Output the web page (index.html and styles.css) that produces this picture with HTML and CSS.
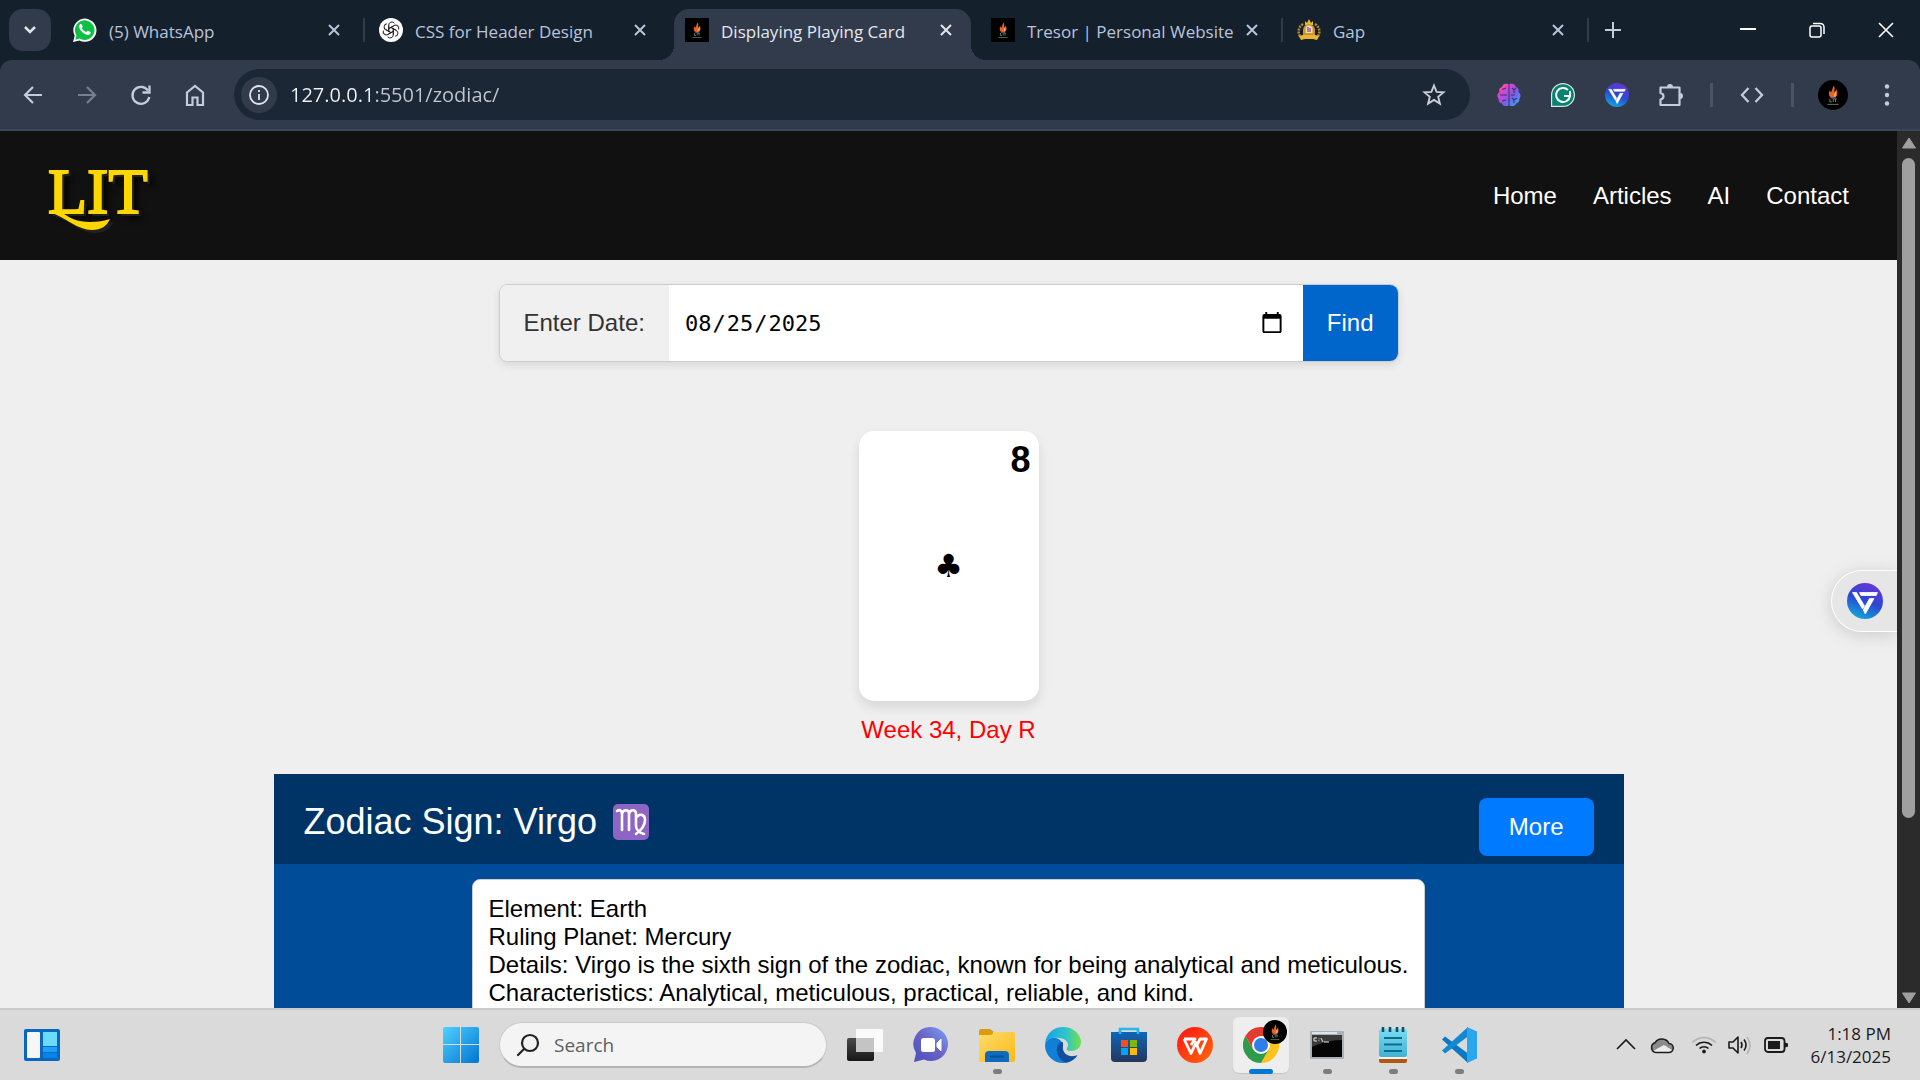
FILE: index.html
```html
<!DOCTYPE html>
<html lang="en">

<head>
    <meta charset="UTF-8">
    <meta name="viewport" content="width=device-width, initial-scale=1.0">
    <title>Displaying Playing Card</title>
    <link rel="stylesheet" href="styles.css">
</head>

<body>

    <!-- Shared icons -->
    <svg class="sprite" aria-hidden="true">
        <defs>
            <linearGradient id="gradV" x1="0.7" y1="0" x2="0.3" y2="1">
                <stop offset="0" stop-color="#6a35d8"/>
                <stop offset="0.5" stop-color="#2a48d2"/>
                <stop offset="1" stop-color="#12a9dc"/>
            </linearGradient>
            <linearGradient id="gradWin" x1="0" y1="0" x2="1" y2="1">
                <stop offset="0" stop-color="#4fd2ff"/>
                <stop offset="1" stop-color="#0173d2"/>
            </linearGradient>
            <linearGradient id="gradBrain" x1="0" y1="0" x2="1" y2="1">
                <stop offset="0" stop-color="#ff9a3d"/>
                <stop offset="0.25" stop-color="#e83fd0"/>
                <stop offset="0.6" stop-color="#7a5cf0"/>
                <stop offset="1" stop-color="#2fb4ff"/>
            </linearGradient>
            <linearGradient id="gradChat" x1="0" y1="1" x2="1" y2="0">
                <stop offset="0" stop-color="#4a50c0"/>
                <stop offset="0.5" stop-color="#6a61c4"/>
                <stop offset="1" stop-color="#7ba4fa"/>
            </linearGradient>
            <linearGradient id="gradFolder" x1="0" y1="0" x2="1" y2="1">
                <stop offset="0" stop-color="#ffdc6b"/>
                <stop offset="1" stop-color="#fbb918"/>
            </linearGradient>
            <linearGradient id="gradEdge" x1="0" y1="0" x2="1" y2="0">
                <stop offset="0" stop-color="#1b9de2"/>
                <stop offset="0.55" stop-color="#2cc3d2"/>
                <stop offset="1" stop-color="#6ee04c"/>
            </linearGradient>
            <linearGradient id="gradStore" x1="0" y1="0" x2="0" y2="1">
                <stop offset="0" stop-color="#0f66b8"/>
                <stop offset="1" stop-color="#24365f"/>
            </linearGradient>
            <linearGradient id="gradWps" x1="0" y1="0" x2="1" y2="1">
                <stop offset="0" stop-color="#ff1313"/>
                <stop offset="1" stop-color="#ff6a0a"/>
            </linearGradient>
            <linearGradient id="gradNote" x1="0" y1="0" x2="0" y2="1">
                <stop offset="0" stop-color="#7bdcf2"/>
                <stop offset="1" stop-color="#3fb2d4"/>
            </linearGradient>
            <linearGradient id="gradTask" x1="0" y1="0" x2="0" y2="1">
                <stop offset="0" stop-color="#4a4a4a"/>
                <stop offset="1" stop-color="#171717"/>
            </linearGradient>
        </defs>
        <symbol id="close" viewBox="0 0 14 14">
            <path d="M2 2l10 10M12 2L2 12" fill="none" stroke="currentColor" stroke-width="2"/>
        </symbol>
        <symbol id="flame" viewBox="0 0 24 24">
            <path d="M12.500 4.500c1.600 2 .2 3.800.8 5.500.5-.8.800-1.600 1.500-2.600 1.300 3 .8 5.600-1 6.600-1.800.8-4 .3-4.800-1.500-.6-1.800 0-3.500.6-4.300.2.9.5 1.400.9 1.500.9-1.500 1-3.400 2-5.200z" fill="#e8622b"/>
            <path d="M14.200 9c.8 2 0 4-1.200 4.600-.8-1.200.4-3 1.200-4.600z" fill="#ffc04a"/>
            <path d="M9.500 13c1.500 1.300 3.500 1.300 5 0l-1 2h-3z" fill="#6a35c9"/>
            <path d="M9.500 15v2.500h1.500M12.200 15v2.500M13 15.200h2M14 15.200v2.300" fill="none" stroke="#5f9c2b" stroke-width="0.8"/>
            <path d="M7.500 19.500h9" stroke="#7a7a7a" stroke-width="0.7"/>
        </symbol>
        <symbol id="vmark" viewBox="0 0 36 36">
            <circle cx="18" cy="18" r="18" fill="url(#gradV)"/>
            <path d="M12.500 9.500H30.500l-1.300 3H14zM5.500 9.500h4l8 13.500-2 3zM22.500 15.500h4.500l-8.700 15.500-2-4z" fill="#fff" stroke="#fff" stroke-width="0.8" stroke-linejoin="round"/>
        </symbol>
    </svg>

    <!-- Tab strip -->
    <div class="tab-strip">
        <button class="tab-search" aria-label="Search tabs">
            <svg width="16" height="16" viewBox="0 0 16 16"><path d="M3 5l5 5 5-5" fill="none" stroke="#dfe3ea" stroke-width="2.500"/></svg>
        </button>
        <div class="tabs">
            <div class="tab">
                <svg class="favicon" viewBox="0 0 24 24">
                    <path d="M0 24l1.700-6.200A11.600 11.600 0 1 1 6.300 22.400z" fill="#fff"/>
                    <path d="M2.200 21.800l1.200-4.400a9.800 9.800 0 1 1 3.300 3.200z" fill="#0fc143"/>
                    <path d="M8.600 6.300c-.3-.6-1.200-.5-1.600 0-2.600 3 1.600 7.700 4 9.200 2.500 1.500 4.500 2 6.100.4.600-.7.700-1.700.4-1.900l-2.600-1.300c-.6-.2-1.300 1.500-1.900 1.300-1.700-.6-3.400-2.200-4.100-3.700-.2-.5 1-1.200.9-1.700z" fill="#fff"/>
                </svg>
                <button class="tab-title">(5) WhatsApp</button>
                <button class="tab-close" aria-label="Close tab"><svg><use href="#close"/></svg></button>
            </div>
            <div class="tab">
                <svg class="favicon" viewBox="0 0 24 24">
                    <circle cx="12" cy="12" r="12" fill="#fff"/>
                    <g fill="none" stroke="#222" stroke-width="1" stroke-linejoin="round">
                        <path id="petal" d="M9.700 13.300V7.200a3.200 3.200 0 0 1 5.700-2M9.700 10.700l5.200-3"/>
                        <use href="#petal" transform="rotate(60 12 12)"/>
                        <use href="#petal" transform="rotate(120 12 12)"/>
                        <use href="#petal" transform="rotate(180 12 12)"/>
                        <use href="#petal" transform="rotate(240 12 12)"/>
                        <use href="#petal" transform="rotate(300 12 12)"/>
                    </g>
                </svg>
                <button class="tab-title">CSS for Header Design</button>
                <button class="tab-close" aria-label="Close tab"><svg><use href="#close"/></svg></button>
            </div>
            <div class="tab active">
                <svg class="favicon flame"><use href="#flame"/></svg>
                <button class="tab-title">Displaying Playing Card</button>
                <button class="tab-close" aria-label="Close tab"><svg><use href="#close"/></svg></button>
            </div>
            <div class="tab">
                <svg class="favicon flame"><use href="#flame"/></svg>
                <button class="tab-title">Tresor | Personal Website</button>
                <button class="tab-close" aria-label="Close tab"><svg><use href="#close"/></svg></button>
            </div>
            <div class="tab">
                <svg class="favicon" viewBox="0 0 24 24">
                    <path d="M6 6C0 10 1 16 4 20M18 6c6 4 5 10 2 14" fill="none" stroke="#b9892b" stroke-width="2.500" stroke-dasharray="2 1"/>
                    <path d="M8 3l2 2 2-4 2 4 2-2v4H8z" fill="#f0b92d"/>
                    <path d="M6 12a6 6 0 0 1 12 0v6H6z" fill="#c9952f"/>
                    <path d="M8.500 11a3.500 3.500 0 0 1 7 0v4h-7z" fill="#f0dcb0"/>
                    <path d="M11 9v5M13 10v4" stroke="#8b3f7d" stroke-width="1.200"/>
                    <path d="M2 18l4-1h12l4 1-2 4-4-1H8l-4 1z" fill="#edb52f"/>
                </svg>
                <button class="tab-title">Gap</button>
                <button class="tab-close" aria-label="Close tab"><svg><use href="#close"/></svg></button>
            </div>
        </div>
        <button class="new-tab" aria-label="New tab">
            <svg width="16" height="16" viewBox="0 0 16 16"><path d="M8 0v16M0 8h16" stroke="#c3cbdc" stroke-width="2"/></svg>
        </button>
        <div class="window-controls">
            <button aria-label="Minimize"><svg width="16" height="16" viewBox="0 0 16 16"><path d="M0 7h16" stroke="#fff" stroke-width="2"/></svg></button>
            <button aria-label="Restore"><svg width="16" height="16" viewBox="0 0 16 16" fill="none" stroke="#fff" stroke-width="1.500"><rect x="1" y="4" width="11" height="11" rx="2"/><path d="M4 1.500h7.500a3.500 3.500 0 0 1 3.500 3.500v7"/></svg></button>
            <button aria-label="Close"><svg width="16" height="16" viewBox="0 0 16 16"><path d="M1 1l14 14M15 1L1 15" stroke="#fff" stroke-width="1.600"/></svg></button>
        </div>
    </div>

    <!-- Toolbar -->
    <div class="toolbar">
        <div class="nav-buttons">
            <button aria-label="Back"><svg viewBox="0 0 24 24"><path d="M21 12H4M12 4l-8 8 8 8" fill="none" stroke="#c3cbdc" stroke-width="2.200"/></svg></button>
            <button aria-label="Forward"><svg viewBox="0 0 24 24"><path d="M3 12h17M12 4l8 8-8 8" fill="none" stroke="#78808e" stroke-width="2.200"/></svg></button>
            <button aria-label="Reload"><svg viewBox="0 0 24 24"><path d="M19 7.500A8.500 8.500 0 1 0 20.300 14" fill="none" stroke="#c3cbdc" stroke-width="2.300"/><path d="M20.500 2.500v7h-7" fill="none" stroke="#c3cbdc" stroke-width="2.300"/></svg></button>
            <button aria-label="Home"><svg viewBox="0 0 24 24"><path d="M4 9.500L12 3l8 6.500V22h-5.500v-7.500h-5V22H4z" fill="none" stroke="#c3cbdc" stroke-width="2.200"/></svg></button>
        </div>
        <div class="address-bar">
            <button class="site-info" aria-label="View site information">
                <svg width="22" height="22" viewBox="0 0 22 22"><circle cx="11" cy="11" r="9" fill="none" stroke="#dfe3ea" stroke-width="1.800"/><path d="M11 10v6M11 6v2" stroke="#dfe3ea" stroke-width="1.800"/></svg>
            </button>
            <input type="text" class="url" aria-label="Address" value="127.0.0.1:5501/zodiac/">
            <button class="bookmark" aria-label="Bookmark this tab">
                <svg width="24" height="24" viewBox="0 0 24 24"><path d="M12 2.500l2.600 6.400 6.900.5-5.300 4.500 1.700 6.700-5.900-3.700-5.900 3.700 1.700-6.700L2.500 9.400l6.900-.5z" fill="none" stroke="#c9cdd4" stroke-width="1.900"/></svg>
            </button>
        </div>
        <div class="extensions">
            <button aria-label="Brain extension">
                <svg viewBox="0 0 24 24"><path d="M11.500 1C8 0 6 1 5 4 2 5 2 7 2.500 9 0 10.500 0 14 1.500 15.500c0 3 1 4.500 3.500 5 1 3 4 3 6.500 2zM12.500 1C16 0 18 1 19 4c3 1 3 3 2.500 5 2.500 1.500 2.500 5 1 6.500 0 3-1 4.500-3.500 5-1 3-4 3-6.500 2z" fill="url(#gradBrain)"/><path d="M3 12h7M5 6.500l4-1.500M5 18l4-1M15 5l2 2 2-2M17 7v3M15 15l2 2 3-2M17 17v3M14 12h4" fill="none" stroke="#333c60" stroke-width="1.200"/></svg>
            </button>
            <button aria-label="Grammar extension">
                <svg viewBox="0 0 24 24"><path d="M0 24V12a12 12 0 1 1 12 12z" fill="#d8e6e2"/><path d="M1.200 22.800V12A10.800 10.800 0 1 1 12 22.800z" fill="#048272"/><path d="M17 7a7 7 0 1 0 2 6h-6M19 8v5" fill="none" stroke="#fff" stroke-width="2"/></svg>
            </button>
            <button aria-label="V extension"><svg><use href="#vmark"/></svg></button>
            <button aria-label="Extensions">
                <svg viewBox="0 0 24 24"><path d="M1.500 4.500h19v17.500h-19v-5.500c4-1 4-5.500 0-6.500z" fill="none" stroke="#c3cbdc" stroke-width="2.200" stroke-linejoin="round"/><path d="M8 4a3 3 0 0 1 6 0zM21 10a3 3 0 0 1 0 6z" fill="#c3cbdc"/></svg>
            </button>
            <span class="divider"></span>
            <button aria-label="Source viewer"><svg viewBox="0 0 24 24"><path d="M8.500 5L2 12l6.500 7M15.500 5l6.500 7-6.500 7" fill="none" stroke="#c3cbdc" stroke-width="2.300"/></svg></button>
            <span class="divider"></span>
            <button class="profile" aria-label="Profile"><svg><use href="#flame"/></svg></button>
            <button aria-label="Menu"><svg viewBox="0 0 24 24" fill="#c3cbdc"><circle cx="12" cy="3.500" r="2.200"/><circle cx="12" cy="12" r="2.200"/><circle cx="12" cy="20.500" r="2.200"/></svg></button>
        </div>
    </div>

    <!-- Web page -->
    <div class="viewport">
        <div class="page">
            <header class="site-header">
                <a href="#" class="logo">LIT<svg class="swash" viewBox="0 0 60 20"><path d="M0 0h12c6 6 16 10 28 10 8 0 14-1 20-3-3 7-9 11-18 11C28 18 16 6 0 0z" fill="#ffd700"/></svg></a>
                <nav>
                    <a href="#">Home</a>
                    <a href="#">Articles</a>
                    <a href="#">AI</a>
                    <a href="#">Contact</a>
                </nav>
            </header>

            <main>
                <form class="date-form">
                    <label for="date">Enter Date:</label>
                    <input type="date" id="date" name="date" value="2025-08-25">
                    <button type="button">Find</button>
                </form>

                <div class="card">
                    <span class="rank">8</span>
                    <span class="suit">&#9827;&#xFE0E;</span>
                </div>
                <p class="week">Week 34, Day R</p>

                <section class="zodiac">
                    <div class="zodiac-header">
                        <h2>Zodiac Sign: Virgo
                            <svg class="sign" viewBox="0 0 36 36"><rect width="36" height="36" rx="5" fill="#8e65c5"/><path d="M4 7c3-2 5 0 5 3v16M9 10c1-5 7-5 7 0v16M16 10c1-5 7-5 7 0v12c0 4 4 7 8 8M23 14c3-5 9-4 9 2 0 7-5 11-9 14" fill="none" stroke="#fff" stroke-width="2.600" stroke-linecap="round"/></svg>
                        </h2>
                        <button class="more">More</button>
                    </div>
                    <div class="zodiac-body">
                        <div class="details">
                            <p>Element: Earth</p>
                            <p>Ruling Planet: Mercury</p>
                            <p>Details: Virgo is the sixth sign of the zodiac, known for being analytical and meticulous.</p>
                            <p>Characteristics: Analytical, meticulous, practical, reliable, and kind.</p>
                        </div>
                    </div>
                </section>
            </main>

            <button class="assistant" aria-label="Open assistant"><svg width="36" height="36"><use href="#vmark"/></svg></button>
        </div>

        <div class="scrollbar">
            <svg width="16" height="12" viewBox="0 0 16 12"><path d="M8 1l6.500 10h-13z" fill="#9f9f9f" stroke="#9f9f9f" stroke-linejoin="round"/></svg>
            <div class="track"><div class="thumb"></div></div>
            <svg width="16" height="12" viewBox="0 0 16 12"><path d="M8 11L1.500 1h13z" fill="#9f9f9f" stroke="#9f9f9f" stroke-linejoin="round"/></svg>
        </div>
    </div>

    <!-- Taskbar -->
    <div class="taskbar">
        <div class="taskbar-left">
            <button class="app" aria-label="Widgets">
                <svg viewBox="0 0 36 36"><rect y="2" width="36" height="32" rx="2" fill="#0a67bd"/><rect x="3" y="5" width="13" height="26" rx="1" fill="#f6f6f6"/><path d="M19 5h14v14H19z" fill="#6bdcff"/><path d="M19 20h14v5H19z" fill="#1aa0fb"/><path d="M19 26h14v5H19z" fill="#0784ea"/></svg>
            </button>
        </div>

        <div class="taskbar-center">
            <button class="app" aria-label="Start">
                <svg viewBox="0 0 36 36"><path d="M2 0h15v17H0V2a2 2 0 0 1 2-2zM18 0h16a2 2 0 0 1 2 2v15H18zM0 18h17v18H2a2 2 0 0 1-2-2zM18 18h18v16a2 2 0 0 1-2 2H18z" fill="url(#gradWin)"/></svg>
            </button>
            <label class="search">
                <svg width="24" height="24" viewBox="0 0 24 24" fill="none" stroke="#222" stroke-width="2.200" stroke-linecap="round"><circle cx="14" cy="10" r="8"/><path d="M8 16l-6 6"/></svg>
                <input type="text" placeholder="Search" aria-label="Search">
            </label>
            <button class="app" aria-label="Task view">
                <svg viewBox="0 0 36 36"><rect y="11" width="27" height="23" rx="2" fill="url(#gradTask)"/><rect x="9" y="2" width="27" height="23" rx="1" fill="#fff" fill-opacity="0.850"/><path d="M9 11h18v14H9z" fill="#c4c4c4"/></svg>
            </button>
            <button class="app" aria-label="Chat">
                <svg viewBox="0 0 36 36"><path d="M18 0a17 17 0 1 1-7 32.500L1 35l2-9A17 17 0 0 1 18 0z" fill="url(#gradChat)"/><rect x="8" y="11" width="14" height="14" rx="2.500" fill="#fff"/><path d="M24 16l4-4v12l-4-4z" fill="#fff" stroke="#fff" stroke-linejoin="round"/></svg>
            </button>
            <button class="app running" aria-label="File Explorer">
                <svg viewBox="0 0 36 36"><path d="M0 9V4a2 2 0 0 1 2-2h9l4 3h-1v6H0z" fill="#dc9a0e"/><path d="M0 8h12l4-3h18a2 2 0 0 1 2 2v26a2 2 0 0 1-2 2H0z" fill="url(#gradFolder)"/><path d="M6 35v-7a4 4 0 0 1 4-4h16a4 4 0 0 1 4 4v7z" fill="#0d6cc0"/><path d="M11 29.500h14" stroke="#084e93" stroke-width="2"/></svg>
            </button>
            <button class="app" aria-label="Edge">
                <svg viewBox="0 0 36 36"><path d="M0 18a18 18 0 0 0 18 18c6 0 11-3 14-7-6 2-12 0-14-5-2-4 1-6-1-9C12 8 1 10 0 18z" fill="#0f7fd8"/><path d="M13 18c-3 5 0 15 8 17.700 5-1 9-3.700 11.500-7.700-6 2.500-12 1-14-4-1.500-4 .5-6-1-9-2 0-3.500 1-4.500 3z" fill="#0f4f9c"/><path d="M0 17C1 6 9 0 18 0c11 0 18 8 18 15 0 6-5 9-10 9-4 0-5-2-4-3 3-4-1-10-8-10C7 10 2 13 0 17z" fill="url(#gradEdge)"/></svg>
            </button>
            <button class="app" aria-label="Store">
                <svg viewBox="0 0 36 36"><path d="M9 6V2h18v4" fill="none" stroke="#28b8f0" stroke-width="2.500"/><path d="M0 5h36v26a4 4 0 0 1-4 4H4a4 4 0 0 1-4-4z" fill="url(#gradStore)"/><path d="M9 7V3M27 7V3" stroke="#28b8f0" stroke-width="2.500"/><path d="M10 13h7v7h-7z" fill="#f25022"/><path d="M19 13h7v7h-7z" fill="#7fba00"/><path d="M10 21h7v7h-7z" fill="#00a4ef"/><path d="M19 21h7v7h-7z" fill="#ffb900"/></svg>
            </button>
            <button class="app" aria-label="WPS Office">
                <svg viewBox="0 0 36 36"><circle cx="18" cy="18" r="18" fill="url(#gradWps)"/><path d="M7 12h11l-4 6M7 12l7 14.500 5-11 4 11L29.500 12H23l-2.500 5" fill="none" stroke="#fff" stroke-width="2.800" stroke-linejoin="round"/></svg>
            </button>
            <button class="app current" aria-label="Chrome">
                <svg viewBox="0 0 36 36"><path d="M18 9h15.600A18 18 0 0 1 18 36l7.800-13.500z" fill="#fcc31c"/><path d="M18 36A18 18 0 0 1 2.400 9l7.800 13.500 15.600 0z" fill="#2d9c4a"/><path d="M18 9h15.600A18 18 0 0 0 2.400 9l7.800 13.500z" fill="#e33b2e"/><circle cx="18" cy="18" r="9" fill="#fff"/><circle cx="18" cy="18" r="7" fill="#2f7de9"/></svg>
                <svg class="profile-badge"><use href="#flame"/></svg>
            </button>
            <button class="app running" aria-label="Command Prompt">
                <svg viewBox="0 0 36 36"><rect x="1" y="4" width="34" height="28" rx="1" fill="#a9b0b8"/><path d="M3 5h25v2H3z" fill="#dfe4ea"/><path d="M3 8h30v22H3z" fill="#050505"/><path d="M3 8h30v5C22 13 12 16 3 20z" fill="#3a3a3a"/><path d="M8 11H5v3h3M10 11.500v.8M10 13.300v.8M12 11l2 4M15 15h5" fill="none" stroke="#e8e8e8"/></svg>
            </button>
            <button class="app running" aria-label="Notepad">
                <svg viewBox="0 0 36 36"><path d="M4 30h28v4a2 2 0 0 1-2 2H6a2 2 0 0 1-2-2z" fill="#b45510"/><path d="M4 28h28v4H4z" fill="#f2f2f2"/><rect x="4" y="2" width="28" height="28" rx="2" fill="url(#gradNote)"/><path d="M9 11h18M9 17.500h18M9 24h18" stroke="#0d6b8c" stroke-width="2"/><path d="M8 0v5M15 0v5M22 0v5M28 0v5" stroke="#124f66" stroke-width="2.600"/></svg>
            </button>
            <button class="app running" aria-label="Visual Studio Code">
                <svg viewBox="0 0 36 36"><path d="M27 36L1 12.500 4 9.500l23 17z" fill="#0b78c4"/><path d="M1 23.500L27 0v9.500L4 26.500z" fill="#1389d6"/><path d="M26 0l10 4.500v27L26 36z" fill="#2ba6ee"/></svg>
            </button>
        </div>

        <div class="tray">
            <button aria-label="Show hidden icons"><svg viewBox="0 0 24 24"><path d="M3 16l9-9 9 9" fill="none" stroke="#1b1b1b" stroke-width="1.600"/></svg></button>
            <button aria-label="OneDrive"><svg viewBox="0 0 24 24"><path d="M6 19.500a5 5 0 0 1-1-9.700 8 8 0 0 1 14 .7 4.500 4.500 0 0 1-.5 9z" fill="#8b8b8b"/><path d="M3 18l11-6 8 5-3 2.500H6z" fill="#ececec"/><path d="M6 19.500a5 5 0 0 1-1-9.700 8 8 0 0 1 14 .7 4.500 4.500 0 0 1-.5 9z" fill="none" stroke="#1b1b1b" stroke-width="1.500"/></svg></button>
            <button class="status" aria-label="Network, volume and battery">
                <svg viewBox="0 0 24 24" fill="none" stroke="#1b1b1b" stroke-width="1.600"><path d="M0.500 9.500a16 16 0 0 1 23 0" stroke="#b5b5b5"/><path d="M4 12.500a11.500 11.500 0 0 1 16 0M7.500 15.500a6.500 6.500 0 0 1 9 0"/><circle cx="12" cy="18.500" r="1.500" fill="#1b1b1b" stroke-width="1"/></svg>
                <svg viewBox="0 0 24 24" fill="none" stroke="#1b1b1b" stroke-width="1.600"><path d="M1 9h4l5-5v16l-5-5H1z" stroke-linejoin="round"/><path d="M13 9q2 3 0 6M16 6.500q4 5.500 0 11"/><path d="M19 4q6 8 0 17" stroke="#b5b5b5"/></svg>
                <svg viewBox="0 0 24 24"><rect x="1" y="5" width="19.500" height="14" rx="3" fill="none" stroke="#1b1b1b" stroke-width="1.800"/><path d="M4 8h12v8H4z" fill="#1b1b1b"/><path d="M21 9.500l3 1v3l-3 1z" fill="#1b1b1b"/></svg>
            </button>
            <button class="clock"><span>1:18 PM</span><span>6/13/2025</span></button>
        </div>
    </div>

</body>

</html>
```
FILE: styles.css
```css
/* General Reset */
* {
    margin: 0;
    padding: 0;
    box-sizing: border-box;
}

body {
    display: flex;
    flex-direction: column;
    height: 100vh;
    overflow: hidden;
    font-family: Arial, "Liberation Sans", sans-serif;
    font-size: 24px;
    background-color: #15202d;
}

button {
    border: none;
    background: none;
    font-family: inherit;
    cursor: pointer;
}

a {
    text-decoration: none;
}

svg {
    display: block;
    flex-shrink: 0;
}

.sprite {
    position: absolute;
    width: 0;
    height: 0;
}

/* Tab strip */
.tab-strip {
    display: flex;
    align-items: center;
    height: 60px;
    padding: 9px 0 0 9px;
    font-family: "Segoe UI", "Open Sans", sans-serif;
}

.tab-search {
    display: flex;
    align-items: center;
    justify-content: center;
    width: 42px;
    height: 42px;
    margin-bottom: 9px;
    border-radius: 14px;
    background-color: #313b4b;
}

.tabs {
    display: flex;
    gap: 9px;
    margin-left: 11px;
    height: 51px;
}

.tab {
    position: relative;
    display: flex;
    align-items: center;
    width: 297px;
    padding: 0 11px 9px;
    color: #b9c3da;
}

/* Line between two tabs */
.tab::after {
    content: "";
    position: absolute;
    right: -6px;
    top: 9px;
    width: 2px;
    height: 24px;
    background-color: #313b4b;
}

.tab.active::after,
.tab:has(+ .active)::after {
    display: none;
}

.tab.active {
    background-color: #313b4b;
    border-radius: 15px 15px 0 0;
    color: #e4e6ee;
}

/* Curved feet of the active tab */
.tab.active::before {
    content: "";
    position: absolute;
    left: -15px;
    right: -15px;
    bottom: 0;
    height: 15px;
    background: radial-gradient(circle at 0 0, transparent 15px, #313b4b 15px) left / 15px 15px no-repeat,
        radial-gradient(circle at 100% 0, transparent 15px, #313b4b 15px) right / 15px 15px no-repeat;
}

.favicon {
    width: 24px;
    height: 24px;
}

.favicon.flame {
    background-color: #000;
}

.tab-title {
    flex: 1;
    margin-left: 12px;
    padding-top: 3px;
    text-align: left;
    font-size: 17px;
    line-height: 24px;
    white-space: nowrap;
    overflow: hidden;
    color: inherit;
}

.tab-close {
    padding: 7px;
    color: inherit;
}

.tab-close svg {
    width: 14px;
    height: 14px;
}

.new-tab {
    padding: 10px;
    margin: 0 0 9px 12px;
}

.window-controls {
    display: flex;
    margin-left: auto;
    margin-bottom: 9px;
}

.window-controls button {
    display: flex;
    align-items: center;
    justify-content: center;
    width: 69px;
    height: 42px;
}

/* Toolbar */
.toolbar {
    display: flex;
    align-items: center;
    height: 71px;
    padding: 0 21px;
    background-color: #313b4b;
    border-bottom: 2px solid #3d4657;
    border-radius: 12px 12px 0 0;
}

.nav-buttons {
    display: flex;
    gap: 30px;
}

.nav-buttons svg,
.extensions svg {
    width: 24px;
    height: 24px;
}

.address-bar {
    display: flex;
    align-items: center;
    flex: 1;
    height: 51px;
    margin: 0 27px;
    padding: 0 24px 0 7px;
    border-radius: 26px;
    background-color: #1c2736;
}

.site-info {
    display: flex;
    align-items: center;
    justify-content: center;
    width: 36px;
    height: 36px;
    border-radius: 50%;
    background-color: #313b4b;
}

.url {
    flex: 1;
    margin-left: 13px;
    border: none;
    outline: none;
    font-family: "Segoe UI", "Open Sans", sans-serif;
    font-size: 20px;
    color: transparent;
    background: linear-gradient(to right, #f0f2f6 80px, #c2c7d0 80px);
    -webkit-background-clip: text;
    background-clip: text;
}

.extensions {
    display: flex;
    align-items: center;
    gap: 30px;
}

.divider {
    width: 3px;
    height: 24px;
    margin: 0 -3px;
    background-color: #4a5464;
}

.extensions .profile {
    margin: 0 -3px;
    border-radius: 50%;
    background-color: #000;
}

.extensions .profile svg {
    width: 30px;
    height: 30px;
}

/* Web page */
.viewport {
    display: flex;
    flex: 1;
    min-height: 0;
}

.page {
    position: relative;
    flex: 1;
    overflow: hidden;
    background-color: #efefef;
}

.site-header {
    display: flex;
    justify-content: space-between;
    align-items: center;
    height: 129px;
    padding: 0 48px;
    background-color: #111;
}

.logo {
    position: relative;
    padding-bottom: 8px;
    font-family: "Liberation Serif", serif;
    font-size: 64px;
    line-height: 64px;
    color: #ffd700;
    -webkit-text-stroke: 2px #ffd700;
    text-shadow: 3px 3px 0 #222, 6px 6px 6px #000;
}

.swash {
    position: absolute;
    left: 2px;
    top: 52px;
    width: 60px;
    height: 20px;
    filter: drop-shadow(3px 3px 0 #222);
}

.site-header nav {
    display: flex;
    gap: 36px;
}

.site-header nav a {
    color: #fff;
}

main {
    display: flex;
    flex-direction: column;
    align-items: center;
    padding-top: 24px;
}

/* Date form */
.date-form {
    display: flex;
    width: 900px;
    max-width: 90%;
    height: 78px;
    border: 1px solid #ccc;
    border-radius: 9px;
    background-color: #fff;
    box-shadow: 0 3px 9px rgba(0, 0, 0, 0.1);
    overflow: hidden;
}

.date-form label {
    display: flex;
    align-items: center;
    padding: 0 24px;
    background-color: #f0f0f0;
    color: #333;
}

.date-form input {
    flex: 1;
    padding: 0 17px 0 15px;
    border: none;
    outline: none;
    background-color: #fff;
    color: #000;
    font-family: Consolas, "DejaVu Sans Mono", monospace;
    font-size: 22px;
}

.date-form input::-webkit-calendar-picker-indicator {
    width: 24px;
    height: 24px;
}

.date-form button {
    padding: 0 24px;
    background-color: #0066cc;
    color: #fff;
    font-size: 24px;
}

/* Playing card */
.card {
    display: grid;
    grid-template-rows: 1fr auto 1fr;
    width: 180px;
    height: 270px;
    margin-top: 69px;
    padding: 8px;
    border-radius: 15px;
    background-color: #fff;
    box-shadow: 0 6px 12px rgba(0, 0, 0, 0.1);
    color: #000;
}

.rank {
    justify-self: end;
    font-size: 36px;
    font-weight: bold;
}

.suit {
    justify-self: center;
    font-family: "DejaVu Sans", sans-serif;
    font-size: 32px;
    line-height: 36px;
}

.week {
    margin-top: 15px;
    line-height: 28px;
    color: red;
}

/* Zodiac panel */
.zodiac {
    width: 1350px;
    max-width: 90%;
    margin-top: 30px;
    background-color: #004c99;
}

.zodiac-header {
    display: flex;
    justify-content: space-between;
    align-items: flex-start;
    height: 90px;
    padding: 24px 30px 0;
    background-color: #003366;
    color: #fff;
}

.zodiac-header h2 {
    display: flex;
    align-items: center;
    gap: 16px;
    font-size: 36px;
    font-weight: normal;
    line-height: 48px;
}

.sign {
    width: 36px;
    height: 36px;
}

.more {
    height: 58px;
    padding: 0 30px;
    border-radius: 8px;
    background-color: #007bff;
    color: #fff;
    font-size: 24px;
}

.zodiac-body {
    display: flex;
    justify-content: center;
    padding: 15px;
}

.details {
    padding: 15px;
    border: 1px solid #ccc;
    border-radius: 8px;
    background-color: #fff;
    color: #000;
    line-height: 28px;
}

/* Floating assistant button on the page edge */
.assistant {
    position: absolute;
    right: 0;
    top: 50%;
    width: 66px;
    height: 62px;
    padding-left: 15px;
    border: 1px solid #fff;
    border-right: none;
    border-radius: 31px 0 0 31px;
    background-color: #e6e6e6;
    box-shadow: 0 3px 18px rgba(0, 0, 0, 0.15);
}

/* Scrollbar */
.scrollbar {
    display: flex;
    flex-direction: column;
    align-items: center;
    width: 23px;
    padding: 6px 0 4px;
    background-color: #2b2b2b;
}

.track {
    flex: 1;
    padding: 9px 0;
}

.thumb {
    width: 13px;
    height: 80%;
    border-radius: 7px;
    background-color: #9f9f9f;
}

/* Taskbar */
.taskbar {
    display: grid;
    grid-template-columns: 1fr auto 1fr;
    align-items: center;
    height: 72px;
    border-top: 2px solid #cbcbcb;
    background-color: #dadada;
    font-family: "Segoe UI", "Open Sans", sans-serif;
}

.taskbar-left {
    padding-left: 14px;
}

.taskbar-center {
    display: flex;
    align-items: center;
    gap: 10px;
}

.app {
    position: relative;
    display: flex;
    align-items: center;
    justify-content: center;
    width: 56px;
    height: 56px;
    border-radius: 6px;
}

.app svg {
    width: 36px;
    height: 36px;
}

.app.current {
    background-color: #eee;
    box-shadow: 0 1px 1px #c4c4c4;
}

/* Marks below open apps */
.app.running::after,
.app.current::after {
    content: "";
    position: absolute;
    bottom: -1px;
    width: 9px;
    height: 5px;
    border-radius: 3px;
    background-color: #7d7d7d;
}

.app.current::after {
    width: 24px;
    background-color: #0078d4;
}

.app .profile-badge {
    position: absolute;
    top: 3px;
    right: 2px;
    width: 24px;
    height: 24px;
    border-radius: 50%;
    background-color: #000;
}

.search {
    display: flex;
    align-items: center;
    gap: 14px;
    width: 328px;
    height: 46px;
    padding: 0 16px;
    border: 1px solid #cacaca;
    border-bottom: 2px solid #b3b3b3;
    border-radius: 23px;
    background-color: #f4f4f4;
}

.search input {
    flex: 1;
    min-width: 0;
    border: none;
    outline: none;
    background: none;
    font-family: inherit;
    font-size: 19px;
}

.search input::placeholder {
    color: #5f5f5f;
}

.tray {
    display: flex;
    align-items: center;
    justify-content: flex-end;
    gap: 12px;
    padding-right: 29px;
}

.tray svg {
    width: 24px;
    height: 24px;
}

.status {
    display: flex;
    gap: 12px;
    margin-left: 6px;
}

.clock {
    display: flex;
    flex-direction: column;
    align-items: flex-end;
    margin-left: 10px;
    font-size: 17px;
    line-height: 23px;
    color: #1b1b1b;
}
```
